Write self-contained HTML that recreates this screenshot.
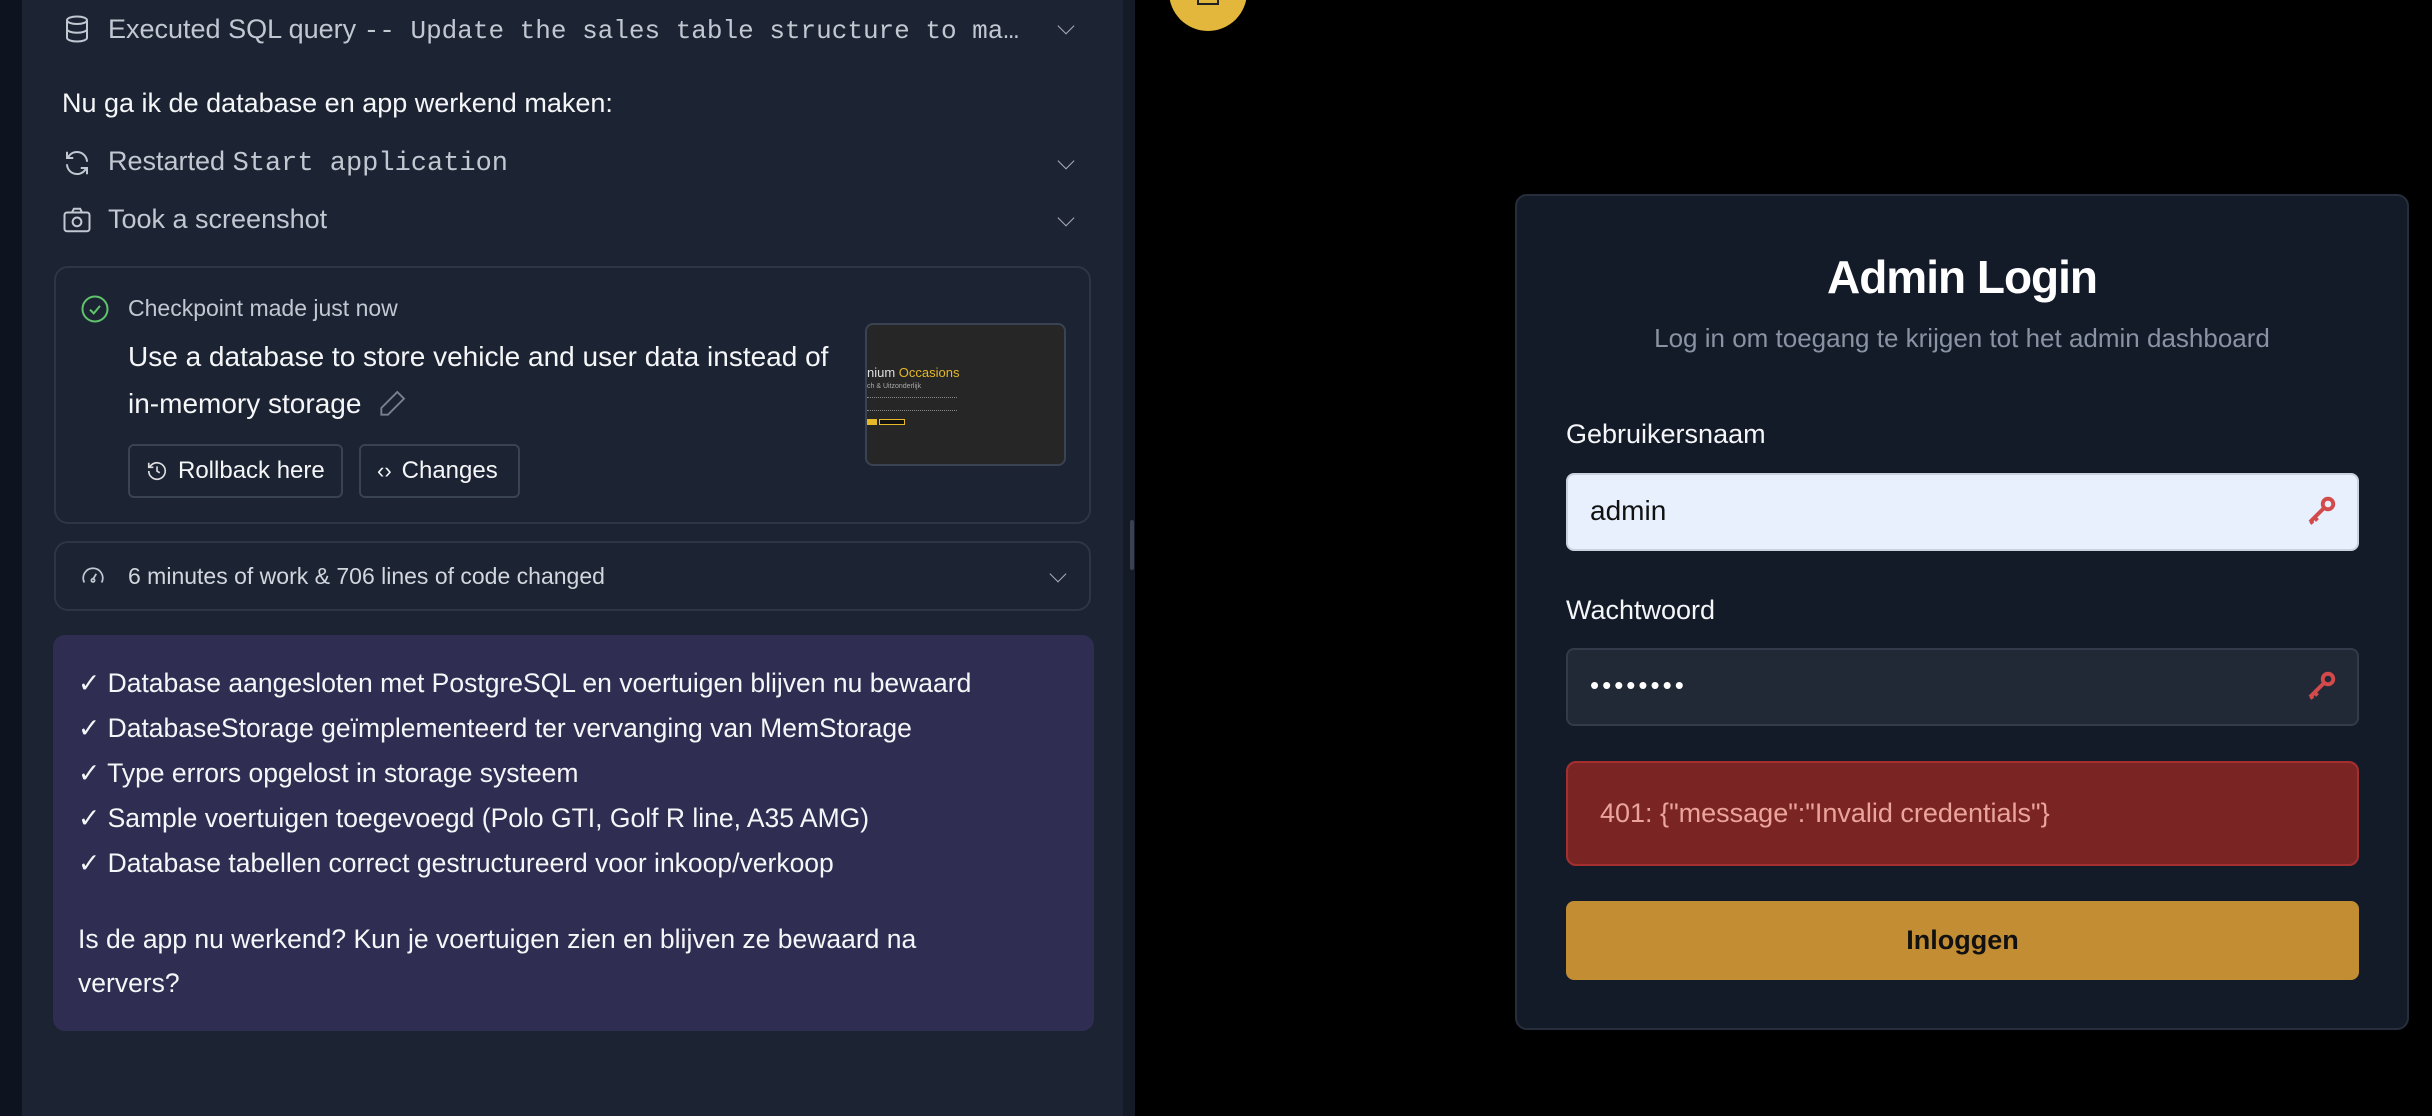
<!DOCTYPE html>
<html><head><meta charset="utf-8"><style>
*{box-sizing:border-box;margin:0;padding:0}
body{width:2432px;height:1116px;background:#000;overflow:hidden;position:relative;font-family:"Liberation Sans",sans-serif}
.abs{position:absolute}
.strip{left:0;top:0;width:22px;height:1116px;background:#0e1320}
.panel{left:22px;top:0;width:1101px;height:1116px;background:#1c2333}
.div{left:1123px;top:0;width:12px;height:1116px;background:#141a26}
.t{color:#f5f6f8;font-size:26px;white-space:nowrap}
.g{color:#c2c8d2}
.mono{font-family:"Liberation Mono",monospace}
.chev{width:12px;height:12px;border-right:1.5px solid #aab;border-bottom:1.5px solid #aab;transform:rotate(45deg)}
.box{border:2px solid #2d3646;border-radius:14px}
.btn{border:2px solid #3a4352;border-radius:6px;color:#f5f6f8;font-size:24px;display:flex;align-items:center;gap:10px;padding-left:16px}
.card{left:1515px;top:194px;width:894px;height:836px;background:#131a28;border:2px solid #262d3b;border-radius:12px}
.in{border-radius:8px;left:1566px;width:793px;height:78px}
</style></head><body>
<div class="abs strip"></div>
<div class="abs panel"></div>
<div class="abs div"></div>
<div class="abs" style="left:1130px;top:520px;width:4px;height:50px;background:#3a4150;border-radius:2px"></div>

<svg class="abs" style="left:62px;top:14px" width="30" height="30" viewBox="0 0 24 24" fill="none" stroke="#c2c8d2" stroke-width="1.6"><ellipse cx="12" cy="5" rx="8" ry="3"/><path d="M4 5v14c0 1.7 3.6 3 8 3s8-1.3 8-3V5M4 12c0 1.7 3.6 3 8 3s8-1.3 8-3"/></svg>
<div class="abs t g" style="left:108px;top:14px;font-size:27px">Executed SQL query <span class="mono" style="font-size:26px">-- Update the sales table structure to ma…</span></div>
<div class="abs chev" style="left:1060px;top:20px"></div>

<div class="abs t" style="left:62px;top:88px;font-size:27px">Nu ga ik de database en app werkend maken:</div>

<svg class="abs" style="left:62px;top:148px" width="30" height="30" viewBox="0 0 24 24" fill="none" stroke="#c2c8d2" stroke-width="1.6"><path d="M20 11a8 8 0 0 0-14.5-4.5L4 8M4 3v5h5M4 13a8 8 0 0 0 14.5 4.5L20 16M20 21v-5h-5"/></svg>
<div class="abs t g" style="left:108px;top:146px;font-size:27px">Restarted <span class="mono">Start application</span></div>
<div class="abs chev" style="left:1060px;top:155px"></div>

<svg class="abs" style="left:62px;top:205px" width="30" height="30" viewBox="0 0 24 24" fill="none" stroke="#c2c8d2" stroke-width="1.6"><rect x="2" y="6" width="20" height="15" rx="2"/><path d="M8 6l1.5-3h5L16 6"/><circle cx="12" cy="13.5" r="3.5"/></svg>
<div class="abs t g" style="left:108px;top:204px;font-size:27px">Took a screenshot</div>
<div class="abs chev" style="left:1060px;top:212px"></div>

<div class="abs box" style="left:54px;top:266px;width:1037px;height:258px"></div>
<svg class="abs" style="left:80px;top:294px" width="30" height="30" viewBox="0 0 24 24" fill="none" stroke="#5fc46b" stroke-width="1.6"><circle cx="12" cy="12" r="10"/><path d="M8 12.5l3 3 5-6"/></svg>
<div class="abs t g" style="left:128px;top:295px;font-size:23px">Checkpoint made just now</div>
<div class="abs t" style="left:128px;top:341px;font-size:28px">Use a database to store vehicle and user data instead of</div>
<div class="abs t" style="left:128px;top:388px;font-size:28px">in-memory storage</div>
<svg class="abs" style="left:376px;top:388px" width="32" height="32" viewBox="0 0 24 24" fill="none" stroke="#7a8290" stroke-width="1.4"><path d="M16 3l5 5L9 20H4v-5z"/></svg>
<div class="abs btn" style="left:128px;top:444px;width:215px;height:54px"><svg width="22" height="22" viewBox="0 0 24 24" fill="none" stroke="#ddd" stroke-width="1.8"><path d="M3 12a9 9 0 1 0 3-6.7L3 8M3 3v5h5M12 7v5l3 2"/></svg>Rollback here</div>
<div class="abs btn" style="left:359px;top:444px;width:161px;height:54px"><span style="font-size:22px">‹›</span>Changes</div>
<div class="abs" style="left:865px;top:323px;width:201px;height:143px;background:#262626;border:2px solid #3a4352;border-radius:8px;overflow:hidden">
<div style="position:absolute;left:0;top:40px;color:#ddd;font-size:13px">nium <span style="color:#e5b82a">Occasions</span></div>
<div style="position:absolute;left:0;top:58px;color:#aaa;font-size:7px">ch &amp; Uitzonderlijk</div>
<div style="position:absolute;left:0;top:72px;width:90px;height:14px;border-top:1px dotted #888;border-bottom:1px dotted #888"></div>
<div style="position:absolute;left:0;top:94px;width:10px;height:6px;background:#e5b82a"></div>
<div style="position:absolute;left:12px;top:94px;width:26px;height:6px;background:#111;border:1px solid #e5b82a"></div>
</div>

<div class="abs box" style="left:54px;top:541px;width:1037px;height:70px"></div>
<svg class="abs" style="left:80px;top:563px" width="26" height="26" viewBox="0 0 24 24" fill="none" stroke="#c2c8d2" stroke-width="1.6"><path d="M4 18a9 9 0 1 1 16 0M12 15l3-5"/><circle cx="12" cy="16" r="1.5"/></svg>
<div class="abs t g" style="left:128px;top:563px;font-size:23px;color:#d2d6dd">6 minutes of work &amp; 706 lines of code changed</div>
<div class="abs chev" style="left:1052px;top:568px"></div>

<div class="abs" style="left:53px;top:635px;width:1041px;height:396px;background:#2f2e52;border-radius:12px"></div>
<div class="abs t" style="left:78px;top:661px;line-height:45px;font-size:26.5px">✓ Database aangesloten met PostgreSQL en voertuigen blijven nu bewaard<br>✓ DatabaseStorage geïmplementeerd ter vervanging van MemStorage<br>✓ Type errors opgelost in storage systeem<br>✓ Sample voertuigen toegevoegd (Polo GTI, Golf R line, A35 AMG)<br>✓ Database tabellen correct gestructureerd voor inkoop/verkoop</div>
<div class="abs t" style="left:78px;top:917px;line-height:44px;font-size:26.5px">Is de app nu werkend? Kun je voertuigen zien en blijven ze bewaard na<br>ververs?</div>

<div class="abs" style="left:1169px;top:-47px;width:78px;height:78px;border-radius:50%;background:#e3b73b"></div>
<div class="abs" style="left:1197px;top:-2px;width:22px;height:7px;border:2px solid #222;border-top:none"></div>

<div class="abs card"></div>
<div class="abs" style="left:1515px;top:250px;width:894px;text-align:center;color:#fff;font-size:46px;font-weight:bold;letter-spacing:-1px">Admin Login</div>
<div class="abs" style="left:1515px;top:323px;width:894px;text-align:center;color:#8a93a3;font-size:26px">Log in om toegang te krijgen tot het admin dashboard</div>
<div class="abs t" style="left:1566px;top:419px;font-size:27px">Gebruikersnaam</div>
<div class="abs in" style="top:473px;background:#e8f0fe;border:2px solid #c9d2de"></div>
<div class="abs" style="left:1590px;top:495px;font-size:28px;color:#111">admin</div>
<div class="abs t" style="left:1566px;top:595px;font-size:27px">Wachtwoord</div>
<div class="abs in" style="top:648px;background:#212836;border:2px solid #333b4a"></div>
<div class="abs" style="left:1590px;top:670px;font-size:26px;color:#fff;letter-spacing:3px">••••••••</div>
<svg class="abs" style="left:2304px;top:492px" width="36" height="36" viewBox="0 0 24 24" fill="none" stroke="#d24a4a" stroke-width="2.6"><circle cx="16" cy="8" r="3.5"/><path d="M13.5 10.5L4 20M7 17l2 2M4.5 19.5l1.5 1.5"/></svg>
<svg class="abs" style="left:2304px;top:667px" width="36" height="36" viewBox="0 0 24 24" fill="none" stroke="#d24a4a" stroke-width="2.6"><circle cx="16" cy="8" r="3.5"/><path d="M13.5 10.5L4 20M7 17l2 2M4.5 19.5l1.5 1.5"/></svg>
<div class="abs" style="left:1566px;top:761px;width:793px;height:105px;background:#7a2524;border:2px solid #a3302e;border-radius:10px"></div>
<div class="abs" style="left:1600px;top:798px;font-size:27px;color:#eaa49c">401: {"message":"Invalid credentials"}</div>
<div class="abs" style="left:1566px;top:901px;width:793px;height:79px;background:#c28d33;border-radius:8px;color:#111;font-size:27px;font-weight:bold;display:flex;align-items:center;justify-content:center">Inloggen</div>
</body></html>
